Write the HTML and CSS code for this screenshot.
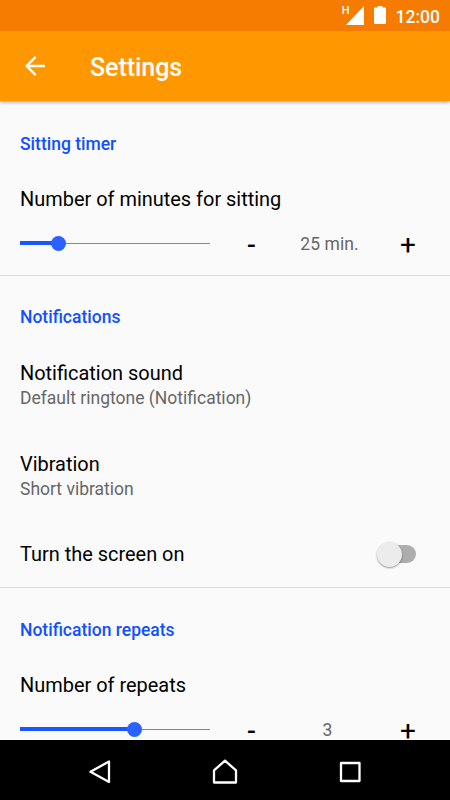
FILE: index.html
```html
<!DOCTYPE html>
<html lang="en">
<head>
<meta charset="utf-8">
<title>Settings</title>
<link rel="stylesheet" href="styles.css">
</head>
<body>
<div class="phone">
  <header class="statusbar">
    <span class="network">H</span>
    <svg class="signal" width="18" height="19" viewBox="0 0 18 19"><path d="M18 0v19H0z"/></svg>
    <svg class="battery" width="12" height="18" viewBox="0 0 12 18"><path d="M3.500 0h5v1.600H11q1 0 1 1V17q0 1-1 1H1q-1 0-1-1V2.600q0-1 1-1h2.500z"/></svg>
    <span class="clock">12:00</span>
  </header>
  <div class="toolbar">
    <svg class="back" width="20" height="20" viewBox="0 0 20 20"><path d="M20 10H1.800M10.700 .9L1.600 10l9.100 9.100"/></svg>
    <h1 class="title">Settings</h1>
  </div>
  <main class="content">
    <section class="section timer">
      <h2 class="category">Sitting timer</h2>
      <div class="item slider-item">
        <div class="label">Number of minutes for sitting</div>
        <div class="controls">
          <div class="slider"><div class="fill" style="width:20%"></div><div class="thumb"></div></div>
          <span class="step minus">-</span>
          <span class="value">25 min.</span>
          <span class="step plus">+</span>
        </div>
      </div>
    </section>
    <section class="section notifications">
      <h2 class="category">Notifications</h2>
      <div class="item two-line">
        <div class="label">Notification sound</div>
        <div class="summary">Default ringtone (Notification)</div>
      </div>
      <div class="item two-line">
        <div class="label">Vibration</div>
        <div class="summary">Short vibration</div>
      </div>
      <div class="item switch-item">
        <div class="label">Turn the screen on</div>
        <div class="switch"><div class="knob"></div></div>
      </div>
    </section>
    <section class="section repeats">
      <h2 class="category">Notification repeats</h2>
      <div class="item slider-item">
        <div class="label">Number of repeats</div>
        <div class="controls">
          <div class="slider"><div class="fill" style="width:60%"></div><div class="thumb"></div></div>
          <span class="step minus">-</span>
          <span class="value count">3</span>
          <span class="step plus">+</span>
        </div>
      </div>
    </section>
  </main>
  <nav class="navbar">
    <svg width="26" height="26" viewBox="0 0 26 26"><path d="M22 2.500v20.600L3.500 12.800z"/></svg>
    <svg width="26" height="26" viewBox="0 0 26 26"><path d="M2 23.500V11.300L13 1.700l11 9.600v12.200z"/></svg>
    <svg width="26" height="26" viewBox="0 0 26 26"><path d="M4 4h18.500v18H4z"/></svg>
  </nav>
</div>
</body>
</html>
```
FILE: styles.css
```css
* { box-sizing: border-box; }
body { margin: 0; font-family: Roboto, "Liberation Sans", sans-serif; background: #000; }
h1, h2 { margin: 0; font-weight: 500; }
svg { display: block; flex: none; }

.phone { width: 450px; height: 800px; display: flex; flex-direction: column; overflow: hidden; background: #fafafa; }

.statusbar { height: 31px; flex: none; z-index: 2; display: flex; justify-content: flex-end; background: #f57c00; color: #fff; padding-right: 10px; }
.statusbar svg { fill: #fff; }
.network { font-size: 11px; line-height: 12px; font-weight: 500; margin-top: 5px; margin-right: -4px; }
.signal { margin-top: 6px; }
.battery { margin: 6px 10px 0 10px; }
.clock { font-size: 17.5px; line-height: 22px; font-weight: 500; margin-top: 6px; }

.toolbar { height: 70px; flex: none; display: flex; align-items: center; gap: 45px; padding-left: 25px; background: #ff9800; color: #fff; box-shadow: 0 1px 4px rgba(0, 0, 0, .4); z-index: 1; }
.back { fill: none; stroke: #fff; stroke-width: 2.4; }
.title { font-size: 25px; line-height: 30px; padding-top: 3px; letter-spacing: -.05px; }

.content { flex: 1; min-height: 0; overflow: hidden; }
.section { border-bottom: 1px solid #dcdcdc; padding: 0 20px; }
.timer { padding-top: 31px; }
.notifications { padding-top: 29px; }
.repeats { padding-top: 30px; }
.category { font-size: 17.5px; line-height: 24px; color: #1150ff; }
.label { font-size: 19.95px; line-height: 24px; color: #000; }
.summary { font-size: 17.5px; line-height: 20px; color: #666; margin-top: 3px; }

.slider-item { height: 119px; padding-top: 31px; }
.controls { display: flex; align-items: center; height: 22px; margin-top: 21px; }
.slider { flex: none; width: 190px; height: 15px; display: flex; align-items: center; background: linear-gradient(#888, #888) 0 7px / 100% 1px no-repeat; }
.fill { height: 4px; background: #1a56ff; }
.thumb { flex: none; width: 15px; height: 15px; border-radius: 50%; background: #2962ff; margin-left: -7.5px; }
.step { flex: none; color: #000; text-align: center; }
.minus { width: 83px; font-size: 26px; line-height: 18px; padding-top: 4px; font-weight: 500; }
.value { flex: none; width: 73px; font-size: 17.5px; line-height: 20px; padding-top: 2px; color: #666; text-align: center; letter-spacing: .1px; }
.count { padding-right: 4px; }
.plus { width: 84px; margin-right: -20px; font-size: 28px; line-height: 19px; padding-top: 3px; font-weight: 400; }

.two-line { height: 91px; padding-top: 32px; }
.switch-item { height: 76px; display: flex; align-items: center; justify-content: space-between; padding: 10px 14px 0 0; }
.switch { width: 40px; height: 26px; display: flex; align-items: center; position: relative; }
.switch::before { content: ""; position: absolute; left: 4px; top: 4px; width: 36px; height: 18px; border-radius: 9px; background: #adadad; }
.knob { position: relative; left: .5px; width: 25px; height: 25px; border-radius: 50%; background: #ececec; box-shadow: 0 1px 2px rgba(0, 0, 0, .4); }

.navbar { height: 60px; flex: none; display: flex; align-items: center; justify-content: center; gap: 99px; padding-top: 4px; background: #000; }
.navbar svg { fill: none; stroke: #fff; stroke-width: 2.3; stroke-linejoin: round; }
```
